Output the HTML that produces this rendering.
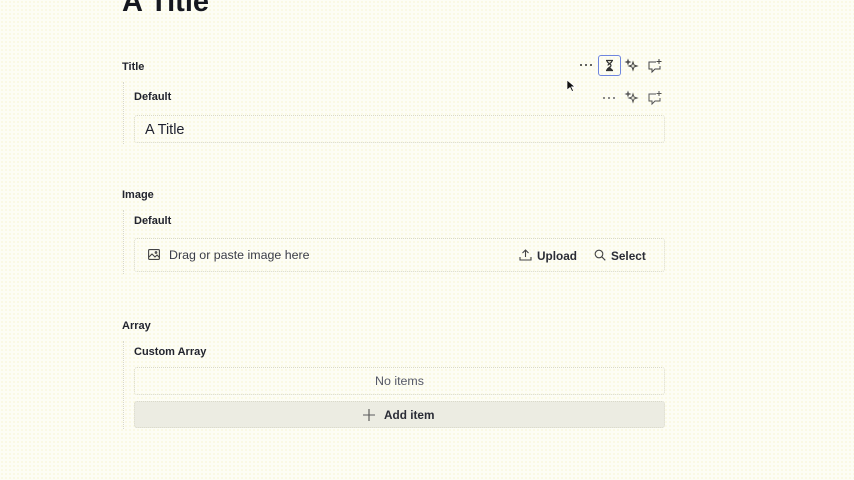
<!DOCTYPE html>
<html><head><meta charset="utf-8"><style>
*{box-sizing:border-box;margin:0;padding:0}
body{width:854px;height:480px;overflow:hidden;background:#fdfdf5;background-image:radial-gradient(#f0ecb0 0.6px,transparent 0.7px);background-size:4px 4px;font-family:"Liberation Sans",sans-serif;color:#1f2130;position:relative}
.a{position:absolute}
h1{position:absolute;left:122px;top:-14px;font-size:29px;font-weight:bold;color:#15171f}
.lbl{font-size:11px;font-weight:bold;color:#22242e}
.vl{position:absolute;width:0;border-left:1px dotted #d8d8cc}
.box{position:absolute;border:1px dotted #d9d9c9;border-radius:3px}
svg{position:absolute}
</style></head><body>
<h1>A Title</h1>
<div class="a lbl" style="left:122px;top:61px">Title</div>
<div class="vl" style="left:123px;top:82px;height:62px"></div>
<div class="a lbl" style="left:134px;top:91px">Default</div>
<div class="box" style="left:134px;top:115px;width:531px;height:28px"></div>
<div class="a" style="left:145px;top:122px;font-size:14.5px;color:#1f2130">A Title</div>

<svg style="left:579px;top:61px" width="14" height="8"><circle cx="2" cy="4" r="1" fill="#333"/><circle cx="7" cy="4" r="1" fill="#333"/><circle cx="12" cy="4" r="1" fill="#333"/></svg>
<div class="a" style="left:598px;top:55px;width:23px;height:21px;border:1.5px solid #6f86e0;border-radius:3px"></div>
<svg style="left:603px;top:59px" width="13" height="13" viewBox="0 0 13 13" fill="none" stroke="#333" stroke-width="1.2"><path d="M3 1.5h7M3 11.5h7M4 1.5c0 3 4 3 4 5s-4 2-4 5M9 1.5c0 3-4 3-4 5"/><path d="M4.5 10.5h4l-2-2z" fill="#333"/></svg>
<svg style="left:624px;top:58px" width="16" height="16" viewBox="0 0 16 16" fill="none" stroke="#444" stroke-width="1"><path d="M9 4l1 3 3 1-3 1-1 3-1-3-3-1 3-1z"/><path d="M4 2l.5 1.5L6 4l-1.5.5L4 6l-.5-1.5L2 4l1.5-.5z"/></svg>
<svg style="left:647px;top:58px" width="16" height="16" viewBox="0 0 16 16" fill="none" stroke="#444" stroke-width="1"><path d="M9 4H2v7h3v3l3-3h5V8"/><path d="M12 1v5M9.5 3.5h5"/></svg>
<svg style="left:602px;top:94px" width="14" height="8"><circle cx="2" cy="4" r="1" fill="#666"/><circle cx="7" cy="4" r="1" fill="#666"/><circle cx="12" cy="4" r="1" fill="#666"/></svg>
<svg style="left:624px;top:90px" width="16" height="16" viewBox="0 0 16 16" fill="none" stroke="#555" stroke-width="1"><path d="M9 4l1 3 3 1-3 1-1 3-1-3-3-1 3-1z"/><path d="M4 2l.5 1.5L6 4l-1.5.5L4 6l-.5-1.5L2 4l1.5-.5z"/></svg>
<svg style="left:647px;top:90px" width="16" height="16" viewBox="0 0 16 16" fill="none" stroke="#555" stroke-width="1"><path d="M9 4H2v7h3v3l3-3h5V8"/><path d="M12 1v5M9.5 3.5h5"/></svg>
<svg style="left:566px;top:79px" width="10" height="14" viewBox="0 0 10 14"><path d="M1 1v10l3-2.5 2 4 1.5-.8-2-3.8H9z" fill="#111" stroke="#fff" stroke-width=".7"/></svg>

<div class="a lbl" style="left:122px;top:189px">Image</div>
<div class="vl" style="left:123px;top:210px;height:64px"></div>
<div class="a lbl" style="left:134px;top:215px">Default</div>
<div class="box" style="left:134px;top:238px;width:531px;height:34px"></div>
<svg style="left:148px;top:249px" width="12" height="11" viewBox="0 0 12 11" fill="none" stroke="#444" stroke-width="1.1"><rect x=".6" y=".6" width="10.8" height="9.8" rx="1"/><path d="M1 8l3-3 3 3 2-2 2.5 2.5"/><circle cx="8" cy="3.5" r=".8"/></svg>
<div class="a" style="left:169px;top:248px;font-size:12.4px;color:#3a3c48">Drag or paste image here</div>
<svg style="left:519px;top:249px" width="13" height="12" viewBox="0 0 13 12" fill="none" stroke="#444" stroke-width="1.1"><path d="M6.5 8V1M3.5 4l3-3 3 3M1 8v3h11V8"/></svg>
<div class="a" style="left:537px;top:249px;font-size:11.8px;font-weight:bold;color:#2a2c36">Upload</div>
<svg style="left:594px;top:249px" width="12" height="12" viewBox="0 0 12 12" fill="none" stroke="#444" stroke-width="1.1"><circle cx="5" cy="5" r="3.8"/><path d="M7.8 7.8l3.5 3.5"/></svg>
<div class="a" style="left:611px;top:249px;font-size:11.8px;font-weight:bold;color:#2a2c36">Select</div>

<div class="a lbl" style="left:122px;top:320px">Array</div>
<div class="vl" style="left:123px;top:341px;height:88px"></div>
<div class="a lbl" style="left:134px;top:346px">Custom Array</div>
<div class="box" style="left:134px;top:367px;width:531px;height:28px"></div>
<div class="a" style="left:134px;top:374px;width:531px;text-align:center;font-size:12.4px;color:#555866">No items</div>
<div class="box" style="left:134px;top:401px;width:531px;height:27px;background:#f1f1ea;background-image:radial-gradient(#dcdccc 0.6px,transparent 0.7px);background-size:2px 2px"></div>
<svg style="left:362px;top:408px" width="14" height="14" viewBox="0 0 14 14" stroke="#555" stroke-width="1.1"><path d="M7 1v12M1 7h12"/></svg>
<div class="a" style="left:384px;top:408px;font-size:11.8px;font-weight:bold;color:#2a2c36">Add item</div>
</body></html>
